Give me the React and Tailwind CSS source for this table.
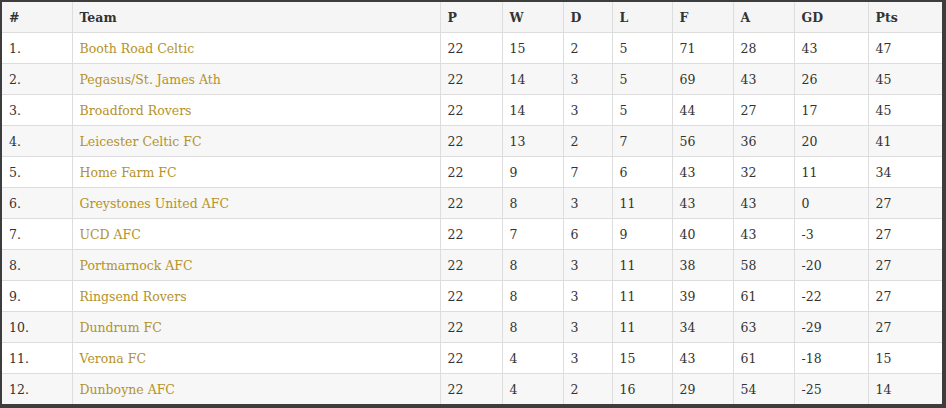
import React from "react";

const rows = [
  ["1.", "Booth Road Celtic", 22, 15, 2, 5, 71, 28, 43, 47],
  ["2.", "Pegasus/St. James Ath", 22, 14, 3, 5, 69, 43, 26, 45],
  ["3.", "Broadford Rovers", 22, 14, 3, 5, 44, 27, 17, 45],
  ["4.", "Leicester Celtic FC", 22, 13, 2, 7, 56, 36, 20, 41],
  ["5.", "Home Farm FC", 22, 9, 7, 6, 43, 32, 11, 34],
  ["6.", "Greystones United AFC", 22, 8, 3, 11, 43, 43, 0, 27],
  ["7.", "UCD AFC", 22, 7, 6, 9, 40, 43, -3, 27],
  ["8.", "Portmarnock AFC", 22, 8, 3, 11, 38, 58, -20, 27],
  ["9.", "Ringsend Rovers", 22, 8, 3, 11, 39, 61, -22, 27],
  ["10.", "Dundrum FC", 22, 8, 3, 11, 34, 63, -29, 27],
  ["11.", "Verona FC", 22, 4, 3, 15, 43, 61, -18, 15],
  ["12.", "Dunboyne AFC", 22, 4, 2, 16, 29, 54, -25, 14],
];

const heads = ["#", "Team", "P", "W", "D", "L", "F", "A", "GD", "Pts"];
const widths = [70, 368, 62, 61, 49, 60, 61, 61, 74, 74];

function LeagueTable() {
  return (
    <div className="w-[946px] h-[408px] bg-white border-t-2 border-l-2 border-r-4 border-b-4 border-[#3d3d3d] overflow-hidden">
      <div className="rounded-br-[4px] border-r border-b border-[#dddddd] w-[941px] overflow-hidden">
        <table className="table-fixed border-collapse w-full text-[12.5px] text-[#333333] font-['DejaVu_Serif',serif]">
          <colgroup>
            {widths.map((w, i) => (
              <col key={i} style={{ width: w }} />
            ))}
          </colgroup>
          <thead>
            <tr className="bg-[#f5f5f5] h-[30px]">
              {heads.map((h, i) => (
                <th
                  key={h}
                  className={`text-left font-bold px-[7px] pt-[3px] pb-0 border-b border-[#dddddd] ${i < 9 ? "border-r" : ""}`}
                >
                  {h}
                </th>
              ))}
            </tr>
          </thead>
          <tbody>
            {rows.map((r, ri) => (
              <tr key={r[0]} className={`h-[31px] ${ri % 2 ? "bg-[#f7f7f7]" : "bg-white"}`}>
                {r.map((c, i) => (
                  <td
                    key={i}
                    className={`px-[7px] pt-[4px] pb-0 border-[#dddddd] ${ri < 11 ? "border-b" : ""} ${i < 9 ? "border-r" : ""} ${i === 1 ? "text-[#b5922a]" : ""}`}
                  >
                    {c}
                  </td>
                ))}
              </tr>
            ))}
          </tbody>
        </table>
      </div>
    </div>
  );
}

export default function App() {
  return <LeagueTable />;
}
